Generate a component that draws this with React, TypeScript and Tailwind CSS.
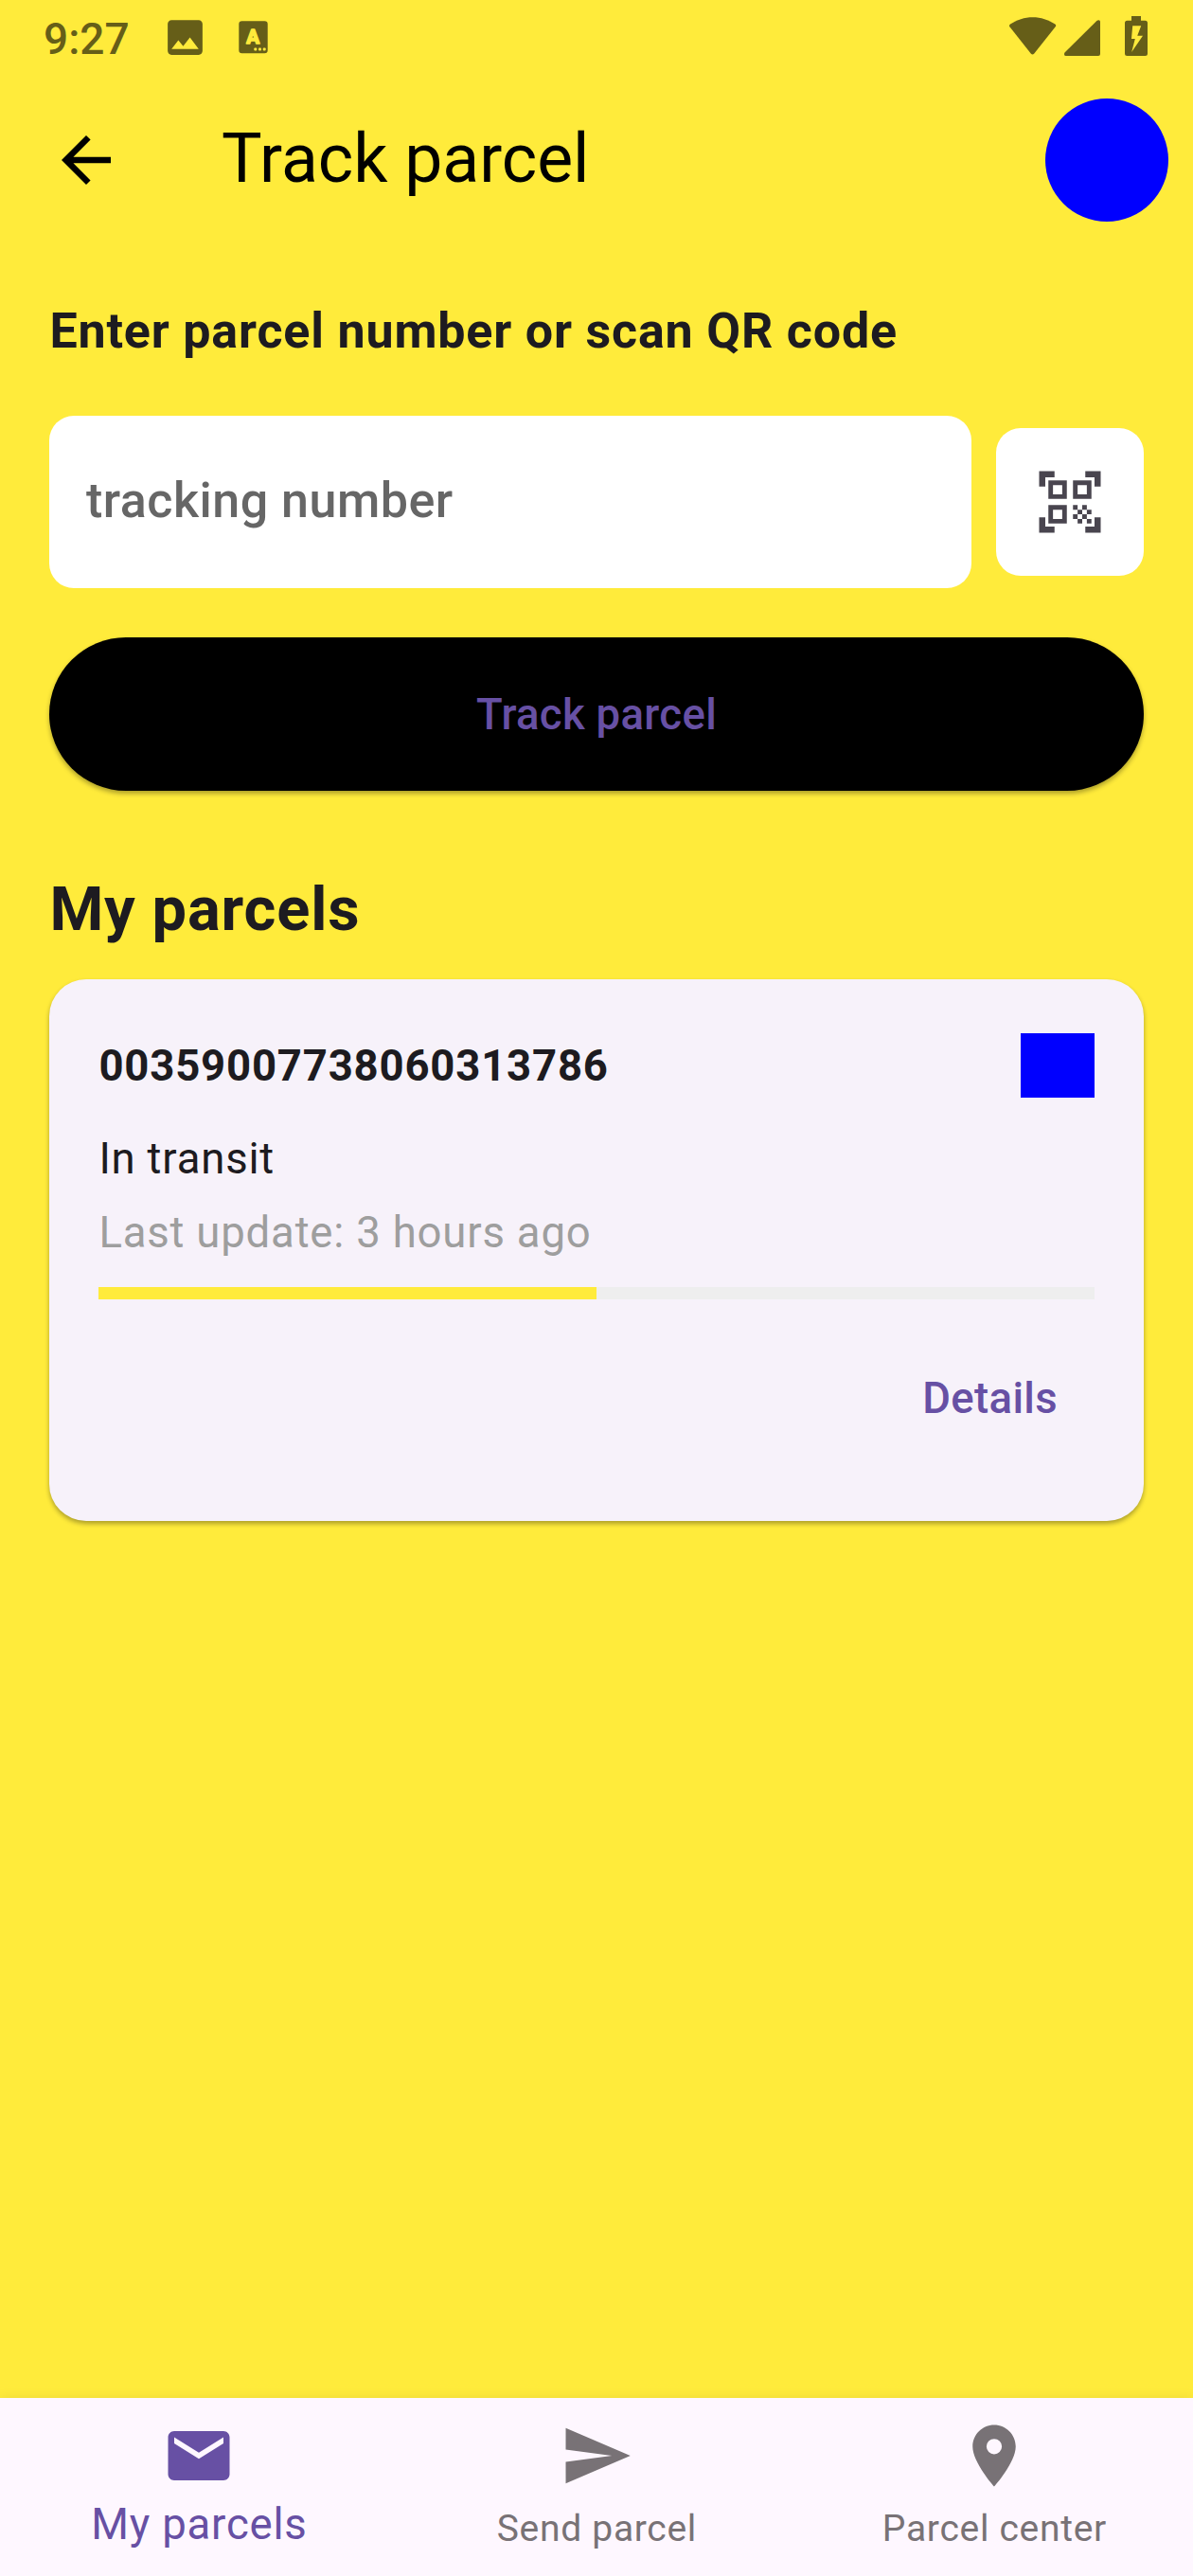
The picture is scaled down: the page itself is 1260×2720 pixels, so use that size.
import type { ReactNode } from "react";
import {
  MdArrowBack,
  MdImage,
  MdLocationOn,
  MdMail,
  MdQrCodeScanner,
  MdSend,
} from "react-icons/md";

function KeyboardIcon() {
  return (
    <svg width="31" height="35" viewBox="0 0 31 35">
      <rect x="0.3" y="0.3" width="30.4" height="34" rx="3.2" fill="currentColor" />
      <text
        x="15.2"
        y="24"
        textAnchor="middle"
        fontFamily="Roboto"
        fontWeight="700"
        fontSize="20.5"
        fill="#ffeb3b"
        stroke="#ffeb3b"
        strokeWidth="1.6"
        strokeLinejoin="round"
      >
        A
      </text>
      <g fill="#ffeb3b">
        <rect x="16.3" y="28.4" width="3" height="3" rx="1" />
        <rect x="21" y="28.4" width="3" height="3" rx="1" />
        <rect x="25.7" y="28.4" width="3" height="3" rx="1" />
      </g>
    </svg>
  );
}

function WifiIcon() {
  return (
    <svg width="50" height="40" viewBox="0 0 50 40" fill="currentColor">
      <path d="M1 7.6C8 2.8 16 0.2 24.7 0.2S41.200 2.800 48.400 7.600Q49.900 8.700 48.700 10.300L26.300 38.500Q24.500 40.400 22.700 38.500L0.400 10.300Q-0.600 8.700 1 7.600Z" />
    </svg>
  );
}

function SignalIcon() {
  return (
    <svg width="38" height="38" viewBox="0 0 38 38" fill="currentColor">
      <path d="M0.500 34.600L34.600 0.700Q36 -0.200 37.300 0.400Q38 1 38 2V36Q38 38 36 38H1.700Q0.200 38 0 36.500Q0 35.300 0.500 34.600Z" />
    </svg>
  );
}

function BatteryIcon() {
  return (
    <svg width="24" height="42" viewBox="0 0 24 42" fill="currentColor">
      <path
        fillRule="evenodd"
        d="M7 0H17V4.700H21.500Q24 4.700 24 7.200V39.500Q24 42 21.500 42H2.500Q0 42 0 39.500V7.200Q0 4.700 2.500 4.700H7ZM8.200 10.300L7 24H10.800L7.200 38L19 20.800H13.200L17.200 10.300Z"
      />
    </svg>
  );
}

function StatusBar() {
  return (
    <div className="flex h-[78px] shrink-0 items-start justify-between pl-[46px] pr-12 text-[#665e18]">
      <div className="flex items-start">
        <span className="mt-[14px] w-[124.500px] text-[46px] font-medium leading-[54px]">9:27</span>
        <MdImage className="mt-[14.500px] size-[49px]" />
        <span className="ml-[32.500px] mt-[22px]">
          <KeyboardIcon />
        </span>
      </div>
      <div className="flex items-start">
        <span className="mt-[18px]">
          <WifiIcon />
        </span>
        <span className="ml-2 mt-[21px]">
          <SignalIcon />
        </span>
        <span className="ml-[26px] mt-[17px]">
          <BatteryIcon />
        </span>
      </div>
    </div>
  );
}

function NavItem({
  icon,
  label,
  active = false,
}: {
  icon: ReactNode;
  label: string;
  active?: boolean;
}) {
  return (
    <button
      className={
        active
          ? "flex flex-1 flex-col items-center pt-[22.500px] text-[45.500px] leading-[67px] tracking-[0.8125px] text-[#6750a4]"
          : "flex flex-1 flex-col items-center pt-[22.500px] text-[39px] leading-[76px] tracking-[0.7px] text-[#787276]"
      }
    >
      {icon}
      <span className="pl-[0.8px]">{label}</span>
    </button>
  );
}

export default function App() {
  return (
    <div className="flex h-[2720px] w-[1260px] flex-col overflow-hidden bg-[#ffeb3b] font-['Roboto',sans-serif] text-[#1d1b20]">
      <StatusBar />

      <header className="flex h-[182px] shrink-0 items-center pl-[52px] pr-[26px] text-black">
        <MdArrowBack className="size-[78px]" />
        <h1 className="ml-[104px] flex-1 pb-[3px] text-[71.500px] leading-[90px]">Track parcel</h1>
        <div className="size-[130px] rounded-full bg-[#0000ff]" />
      </header>

      <main className="flex flex-1 flex-col px-[52px] pt-[52px]">
        <h2 className="h-[74.750px] pl-[0.4px] pt-px text-[52px] font-bold leading-[74.750px] tracking-[0.8125px]">
          Enter parcel number or scan QR code
        </h2>

        <div className="mt-[52px] flex items-center gap-[26px]">
          <div className="flex h-[182px] flex-1 items-center rounded-[26px] bg-white px-[39px] pb-[2px] text-[52px] font-medium tracking-[0.4875px] text-[#666666]">
            tracking number
          </div>
          <button className="flex size-[156px] items-center justify-center rounded-[26px] bg-white text-[#49454f]">
            <MdQrCodeScanner className="size-[78px]" />
          </button>
        </div>

        <button className="mt-[52px] h-[162.500px] shrink-0 rounded-full bg-black pt-[2px] text-[45.500px] font-medium tracking-[0.325px] text-[#6750a4] shadow-[0_3px_5px_rgba(0,0,0,0.32)]">
          Track parcel
        </button>

        <h2 className="mt-[78px] pl-[0.4px] text-[65px] font-bold leading-[94.250px] tracking-[0.8125px]">
          My parcels
        </h2>

        <section className="mt-[26px] flex h-[572px] flex-col rounded-[39px] bg-[#f7f2fa] p-[52px] shadow-[0_3px_5px_rgba(0,0,0,0.32)]">
          <div className="flex h-[78px] items-center justify-between">
            <span className="pl-[0.4px] pt-px text-[45.500px] font-bold leading-[65px] tracking-[0.8125px]">
              00359007738060313786
            </span>
            <div className="h-[68px] w-[78px] bg-[#0000ff]" />
          </div>
          <p className="mt-[26px] h-[65px] pl-[0.4px] pt-px text-[45.500px] leading-[65px] tracking-[0.8125px]">
            In transit
          </p>
          <p className="mt-[13px] h-[65px] pl-[0.4px] pt-px text-[45.500px] leading-[65px] tracking-[0.8125px] text-[#9e9e9e]">
            Last update: 3 hours ago
          </p>
          <div className="mt-[26px] h-[13px] bg-[#eeeeee]">
            <div className="h-full w-1/2 bg-[#ffeb3b]" />
          </div>
          <button className="mt-[26px] h-[156px] self-end px-[39px] pt-[3px] text-[45.500px] font-medium tracking-[0.325px] text-[#6750a4]">
            Details
          </button>
        </section>
      </main>

      <nav className="flex h-[188.500px] shrink-0 bg-[#fef7ff] shadow-[0_0_12px_rgba(0,0,0,0.08)]">
        <NavItem active icon={<MdMail className="size-[78px]" />} label="My parcels" />
        <NavItem icon={<MdSend className="size-[78px]" />} label="Send parcel" />
        <NavItem icon={<MdLocationOn className="size-[78px]" />} label="Parcel center" />
      </nav>
    </div>
  );
}
